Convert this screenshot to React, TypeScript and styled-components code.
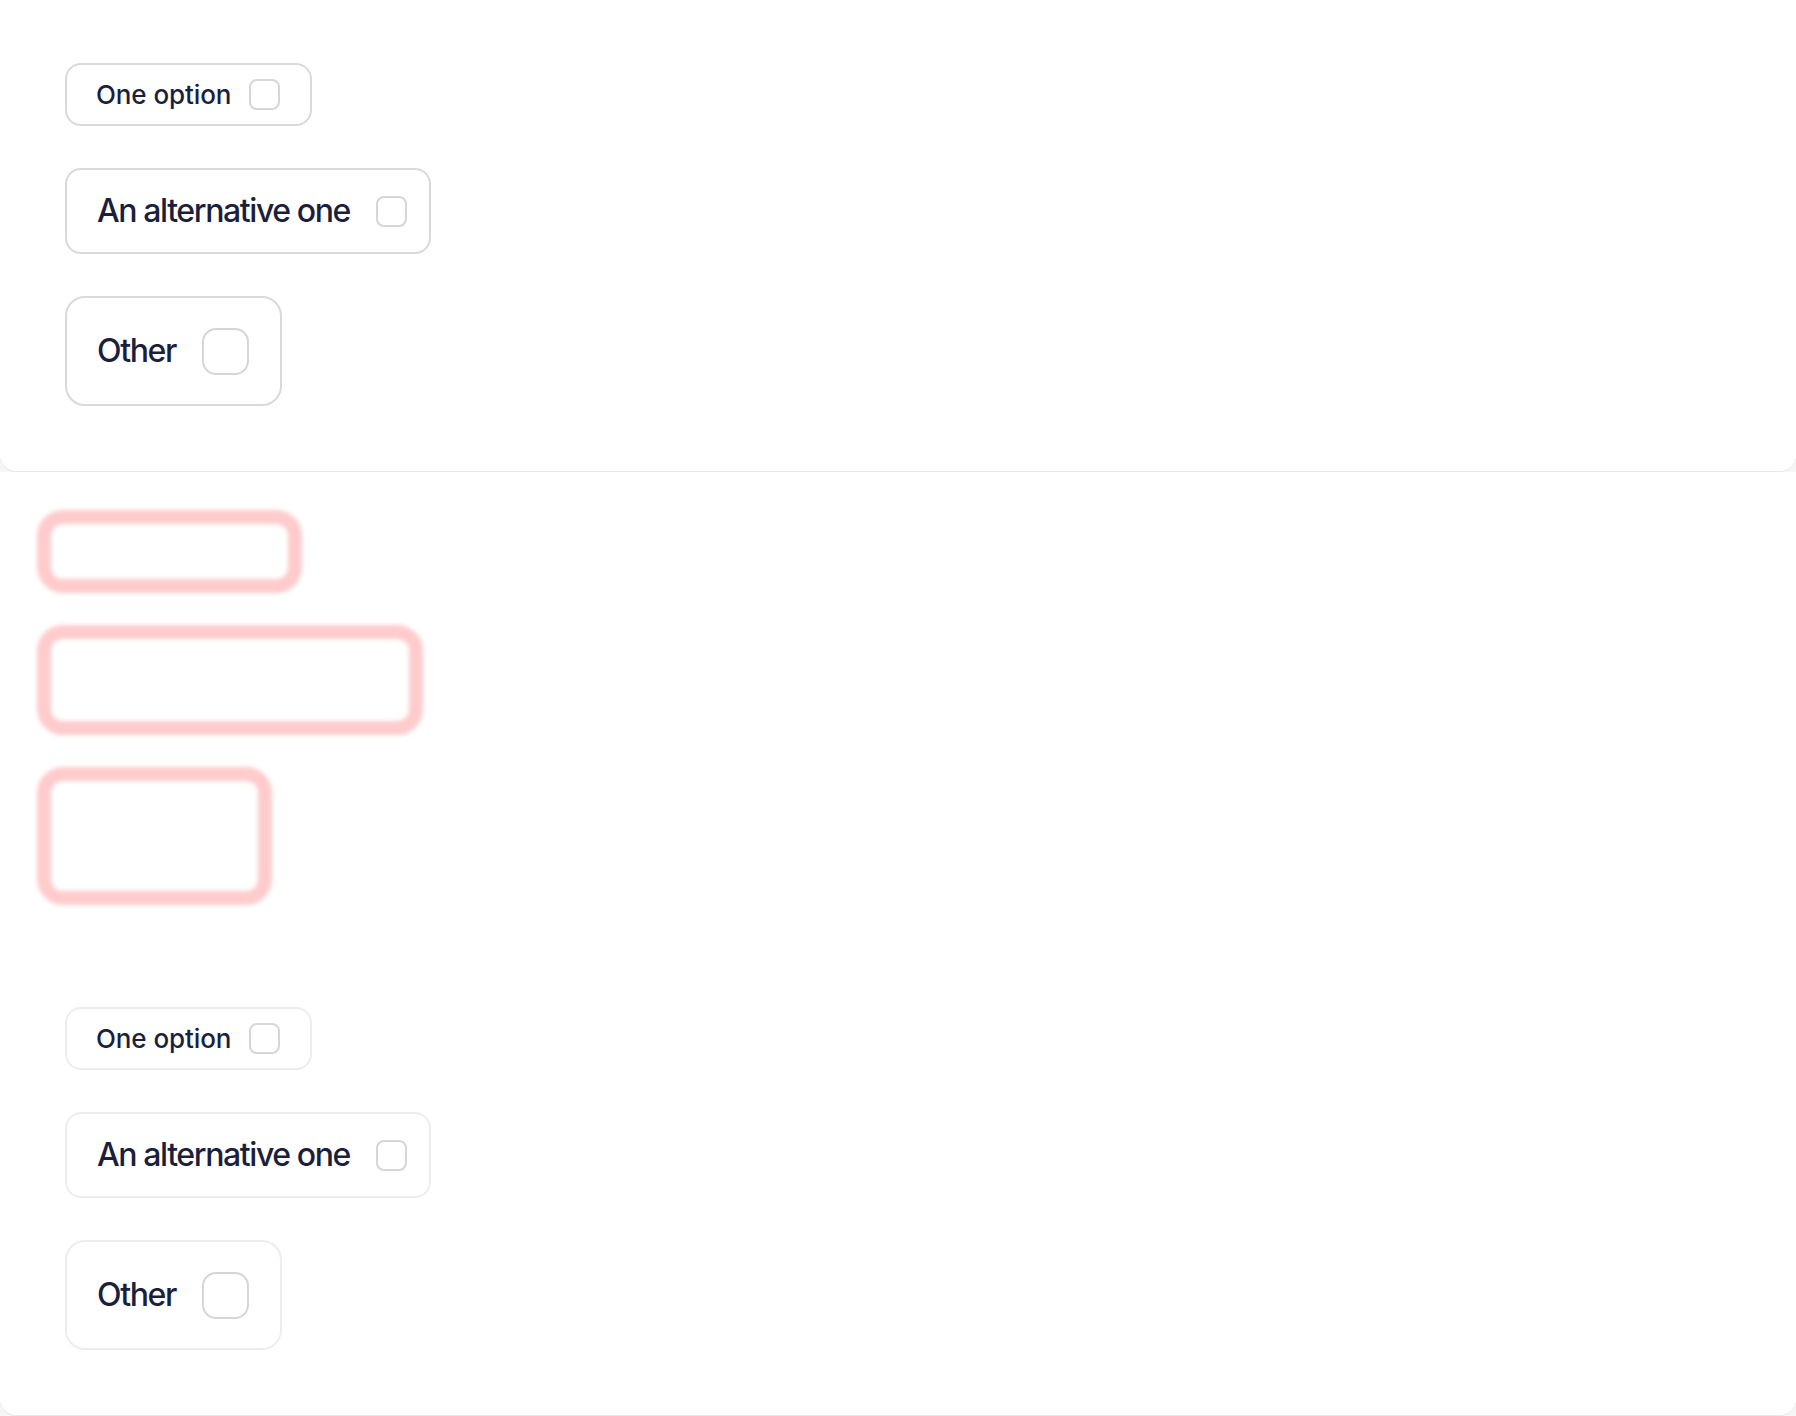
import React from "react";
import styled, { createGlobalStyle, css } from "styled-components";

const GlobalStyle = createGlobalStyle`
  html, body {
    margin: 0;
    padding: 0;
    background: #f6f6f7;
    font-family: "Inter", "Noto Sans", sans-serif;
  }
  * { box-sizing: border-box; }
`;

type Size = "sm" | "md" | "lg";

const sizes = {
  sm: { h: 63, pl: 29, pr: 30, gap: 18, font: 26, ls: -0.1, box: 31, boxR: 8, r: 16 },
  md: { h: 86, pl: 30, pr: 22, gap: 26, font: 32, ls: -1.4, box: 31, boxR: 8, r: 16 },
  lg: { h: 110, pl: 30, pr: 31, gap: 26, font: 32, ls: -1.4, box: 47, boxR: 14, r: 20 },
};

const Card = styled.section`
  background: #ffffff;
  border-radius: 0 0 16px 16px;
  box-shadow: 0 1px 0 #e7e7ea;
  margin-bottom: 1px;
`;

const TopCard = styled(Card)`
  padding: 63px 65px 65px;
`;

const BottomCard = styled(Card)`
  padding: 38px 0 65px;
`;

const List = styled.div<{ $indent?: number }>`
  display: flex;
  flex-direction: column;
  align-items: flex-start;
  gap: 42px;
  padding-left: ${(p) => p.$indent ?? 0}px;
`;

const GhostList = styled.div`
  display: flex;
  flex-direction: column;
  align-items: flex-start;
  gap: 32px;
  padding-left: 37px;
  margin-bottom: 102px;
`;

const Ghost = styled.div<{ $w: number; $h: number }>`
  width: ${(p) => p.$w}px;
  height: ${(p) => p.$h}px;
  border: 14px solid #ffcbcc;
  border-radius: 26px;
  filter: blur(2px);
`;

const Option = styled.label<{ $size: Size; $muted?: boolean }>`
  display: inline-flex;
  align-items: center;
  ${({ $size }) => {
    const s = sizes[$size];
    return css`
      height: ${s.h}px;
      padding: 0 ${s.pr}px 0 ${s.pl}px;
      gap: ${s.gap}px;
      border-radius: ${s.r}px;
      font-size: ${s.font}px;
      letter-spacing: ${s.ls}px;
    `;
  }}
  border: 2px solid ${(p) => (p.$muted ? "#ededef" : "#d9d9dc")};
  background: #ffffff;
  color: #1b1f3b;
  font-weight: 500;
  cursor: pointer;
`;

const Label = styled.span`
  line-height: 1;
  white-space: nowrap;
`;

const Box = styled.span<{ $size: Size }>`
  display: inline-block;
  flex: none;
  width: ${(p) => sizes[p.$size].box}px;
  height: ${(p) => sizes[p.$size].box}px;
  border: 2px solid #d6d6d8;
  border-radius: ${(p) => sizes[p.$size].boxR}px;
  background: #ffffff;
`;

const options: { size: Size; text: string }[] = [
  { size: "sm", text: "One option" },
  { size: "md", text: "An alternative one" },
  { size: "lg", text: "Other" },
];

const OptionList = ({ muted }: { muted?: boolean }) => (
  <List $indent={muted ? 65 : 0}>
    {options.map((o) => (
      <Option key={o.text} $size={o.size} $muted={muted}>
        <Label>{o.text}</Label>
        <Box $size={o.size} />
      </Option>
    ))}
  </List>
);

export default function App() {
  return (
    <>
      <GlobalStyle />
      <TopCard>
        <OptionList />
      </TopCard>
      <BottomCard>
        <GhostList>
          <Ghost $w={265} $h={83} />
          <Ghost $w={386} $h={110} />
          <Ghost $w={235} $h={138} />
        </GhostList>
        <OptionList muted />
      </BottomCard>
    </>
  );
}
